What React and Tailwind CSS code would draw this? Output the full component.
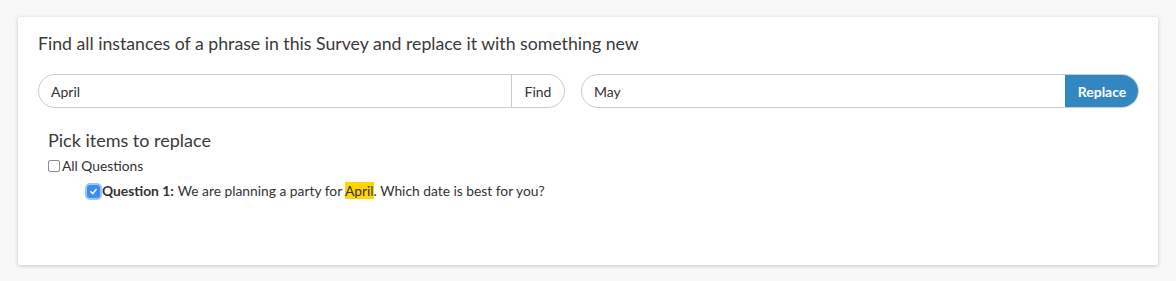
export default function App() {
  return (
    <div className="w-[1176px] h-[281px] bg-[#f8f8f8] pt-[17px] pl-[18px]" style={{ fontFamily: "Lato, 'Open Sans', sans-serif" }}>
      <div className="w-[1140px] h-[248px] bg-white rounded-[2px] shadow-[0_1px_4px_rgba(0,0,0,0.2)] pt-[15px] pl-[20px] pr-[19px] text-[#333]">
        <div className="text-[17.7px] leading-[24px] text-[#3a3a3a]">Find all instances of a phrase in this Survey and replace it with something new</div>
        <div className="flex mt-[18px] h-[34px]">
          <div className="flex w-[527px] h-[34px] border border-[#cccccc] rounded-full overflow-hidden">
            <div className="flex-1 flex items-center pl-[12px] text-[14px] text-[#333]">April</div>
            <div className="w-[53px] border-l border-[#cccccc] flex items-center justify-center text-[14px] text-[#333]">Find</div>
          </div>
          <div className="ml-[16px] flex w-[558px] h-[34px] border border-[#cccccc] rounded-full overflow-hidden">
            <div className="flex-1 flex items-center pl-[12px] text-[14px] text-[#333]">May</div>
            <div className="w-[74px] -my-[1px] -mr-[1px] bg-[#3287c1] flex items-center justify-center text-[14px] font-bold text-white">Replace</div>
          </div>
        </div>
        <div className="pl-[10px] mt-[20px]">
          <div className="text-[18px] leading-[24px] text-[#3a3a3a]">Pick items to replace</div>
          <div className="flex items-center mt-[5px] h-[18px] text-[13.8px]">
            <span className="w-[12px] h-[12px] border border-[#8c8c8c] rounded-[2px] bg-white mr-[2px]"></span>
            <span>All Questions</span>
          </div>
          <div className="flex items-center mt-[7px] h-[18px] text-[13.8px] pl-[39px]">
            <span className="w-[13px] h-[13px] rounded-[3px] bg-[#3b8ef0] shadow-[0_0_0_2px_rgba(80,150,240,0.55)] flex items-center justify-center mr-[2px]">
              <svg width="9" height="9" viewBox="0 0 10 10"><path d="M2 5.3 L4.2 7.4 L8 2.8" fill="none" stroke="white" strokeWidth="1.6" strokeLinecap="round" strokeLinejoin="round" /></svg>
            </span>
            <span className="font-bold">Question 1:</span>
            <span className="ml-[4px]">We are planning a party for <span className="bg-[#ffd400]">April</span>. Which date is best for you?</span>
          </div>
        </div>
      </div>
    </div>
  );
}
